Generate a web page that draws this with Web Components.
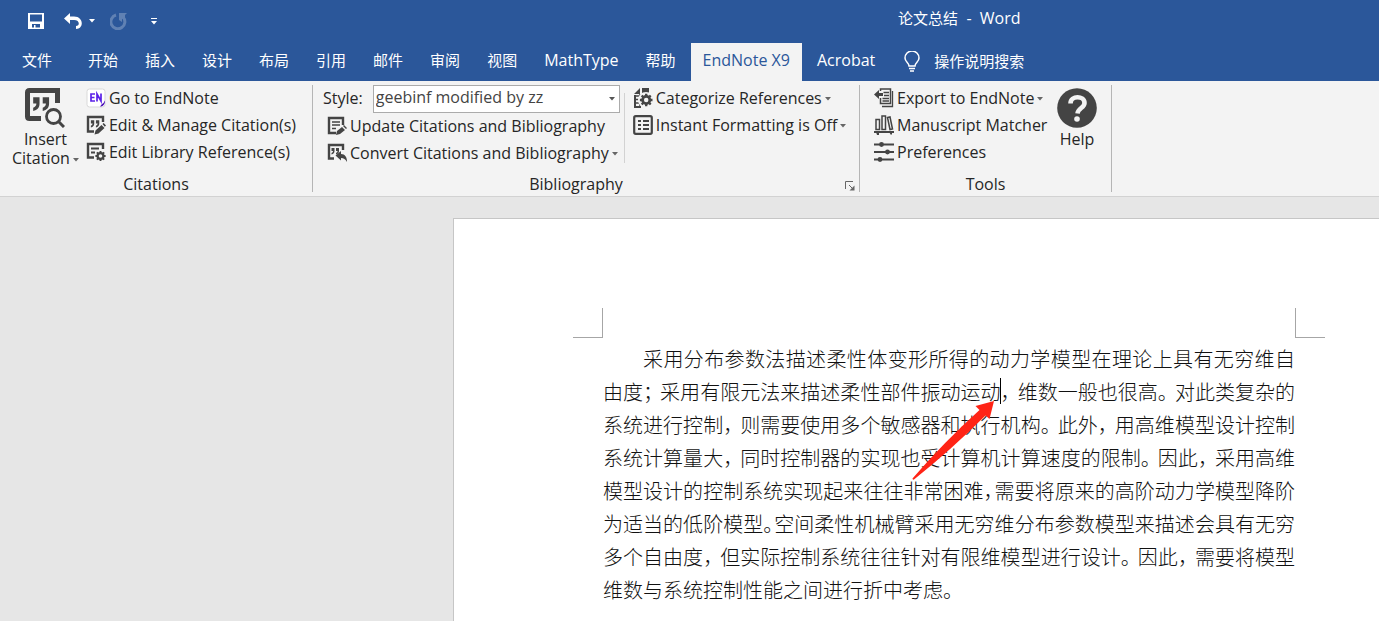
<!DOCTYPE html>
<html lang="zh-CN">
<head>
<meta charset="utf-8">
<title>论文总结 - Word</title>
<style>
  html, body { margin: 0; height: 100%; }
  body {
    --brand: #2b579a;
    --ribbon: #f3f3f3;
    --ink: #262626;
    --icon: #444;
    font: 16px/20px "Open Sans", "Noto Sans CJK SC", sans-serif;
    color: var(--ink);
    overflow: hidden;
  }
</style>
</head>
<body>
<word-app></word-app>
<script>
const define = (name, html, setup) => {
  const template = document.createElement('template');
  template.innerHTML = html;
  customElements.define(name, class extends HTMLElement {
    constructor() {
      super();
      this.attachShadow({ mode: 'open' }).append(template.content.cloneNode(true));
    }
    connectedCallback() { if (setup) setup(this, this.shadowRoot); }
  });
};

const quotes = '<path d="M3 3h6v6c0 4-2 6-6 7v-3c2-1 3-2 3-4H3zM12 3h6v6c0 4-2 6-6 7v-3c2-1 3-2 3-4h-3z"/>';
const gear = (x, y, s) => `<g transform="translate(${x} ${y}) scale(${s})"><circle r="4" fill="none" stroke="currentColor" stroke-width="3"/><path d="M0-7v3M0 4v3M-7 0h3M4 0h3M-5-5l2 2M3 3l2 2M5-5l-2 2M-3 3l-2 2" fill="none" stroke="currentColor" stroke-width="2.6"/></g>`;

const ICONS = {
  insert: [40, 40, `<path d="M16 30.500H4.500q-2 0-2-2V4.500q0-2 2-2h28V15" fill="none" stroke="currentColor" stroke-width="5"/>
    <g transform="translate(5 6) scale(1.060)">${quotes}</g>
    <circle cx="28.500" cy="28.500" r="9.500" fill="var(--ribbon)"/><circle cx="28.500" cy="28.500" r="7" fill="none" stroke="currentColor" stroke-width="2.800"/><path d="M33.500 33.500l5.500 5.500" stroke="currentColor" stroke-width="3"/>`],
  endnote: [20, 20, `<rect x="1" y="1" width="18" height="18" rx="2.500" fill="#fff" stroke="#d9d9d9"/>
    <path d="M9 6H5v7h4M5 9.500h3.500M11 13.500V6l4 7V5.500" fill="none" stroke="#5b21e8" stroke-width="1.700"/><path d="M19 12.500c0 4-2 6-5 6l2-2.500c1.500-.5 2-2 3-3.500z" fill="#4a10b8"/>`],
  cite: [20, 20, `<path d="M8 16.500H2V2h15v5" fill="none" stroke="currentColor" stroke-width="2.400"/><g transform="translate(3.200 3.500) scale(.56)">${quotes}</g><path d="M8.500 19.500l1-4 6-5.500 3 3-6 5.500zM16.500 9l1.200-1 2.300 2.500-1.200 1.200z" />`],
  library: [20, 20, `<path d="M8 15.500H2V2h15v5" fill="none" stroke="currentColor" stroke-width="2.400"/><path d="M5 6.500h8M5 10.500h4" stroke="currentColor" stroke-width="1.800"/>${gear(14.5, 14, .73)}`],
  update: [20, 20, `<path d="M9 17H2V2h14v7" fill="none" stroke="currentColor" stroke-width="2.400"/><path d="M5 6h8M5 9h8M5 12.500h4" stroke="currentColor" stroke-width="1.600"/><path d="M9 19l1-4 5-4 3 3-5 4zM16 10l1-1 3 3-1 1z"/>`],
  convert: [20, 20, `<path d="M7 15.500H2V2h14v5" fill="none" stroke="currentColor" stroke-width="2.400"/><g transform="translate(3 3.500) scale(.5)">${quotes}</g><path d="M8.500 12.500L14 8v3c4 0 6 3 6 8-2-3-3-4-6-4v2.500z"/>`],
  categorize: [20, 20, `<path d="M1 6l6-6v6zM9 0h7v5H9zM1 7h2v13H1zM1 18h7v2H1z"/><path d="M3 8h5M3 11.500h4M3 15h4M7 6v12" fill="none" stroke="currentColor" stroke-width="1.500"/><circle cx="13" cy="12" r="8" fill="var(--ribbon)"/><path d="M9 0h7v4H9z"/>${gear(13.2, 12, .9)}`],
  instant: [20, 20, `<rect x="1.200" y="1.200" width="17.600" height="17.600" rx="1.500" fill="none" stroke="currentColor" stroke-width="2.200"/><path d="M5 6h3M5 10h3M5 14h3M10 6h6M10 10h6M10 14h6" stroke="currentColor" stroke-width="2"/>`],
  export: [20, 20, `<path d="M0 6.500L5 2v3h4v3H5v3z"/><path d="M6.500 3V1h10v14.500h-10V10" fill="none" stroke="currentColor" stroke-width="1.500"/><path d="M18.500 3v15.500H8M9.500 4.500H15M10 7.500h5M8.500 10.500H15M8.500 13H15" fill="none" stroke="currentColor" stroke-width="1.300"/>`],
  books: [20, 20, `<path d="M2 4.500h3.500v10H2zM8 1h3.500v13.500H8zM13.500 2.500L16 2l2.500 12-2.500.5z" fill="none" stroke="currentColor" stroke-width="1.500"/><path d="M0 17h20" stroke="currentColor" stroke-width="2"/><path d="M2 17h3v3H3zM15 17h3v2l-1 1z"/>`],
  prefs: [20, 20, `<path d="M0 2.500h20M0 10h20M0 17.500h20" stroke="currentColor" stroke-width="1.800"/><circle cx="7.500" cy="2.500" r="2.400"/><circle cx="13.500" cy="10" r="2.400"/><circle cx="6" cy="17.500" r="2.400"/>`],
  help: [40, 40, `<circle cx="20" cy="20" r="19.800"/><path d="M13.500 15.500c0-8.500 14-8 14-.5 0 5-6.500 5-7 10.500" fill="none" stroke="var(--ribbon)" stroke-width="4.600"/><circle cx="20" cy="31" r="2.800" fill="var(--ribbon)"/>`],
  arrow: [6, 4, '<path d="M0 0h6L3 3.500z"/>'],
  launcher: [10, 10, '<path d="M.5 8V.5H8M4 4l4 4" fill="none" stroke="currentColor"/><path d="M9.500 4.500v5h-5z"/>'],
  save: [16, 16, '<path d="M0 0h16v16H0zM2 1.500V8.500h12V1.500zM4 11v3.500h2V12h1.500v2.500H12V11z" fill-rule="evenodd"/>'],
  undo: [18, 16, '<path d="M0 5.500L6 0v3.500h4c10 0 10 12.500 2 12.500v-3c4 0 4-6-2-6H6V11z"/>'],
  redo: [17, 17, '<path d="M6 2A7 7 0 1 0 13 4" fill="none" stroke="currentColor" stroke-width="3"/><path d="M9 0h8l-2 2v2.500L12 6v3L9 7z"/>'],
  customize: [6, 7, '<path d="M0 0h6v1H0zM0 3h6L3 6.500z"/>'],
  bulb: [16, 21, '<path d="M5 15c0-3-4-4-4-8a7 7 0 0 1 14 0c0 4-4 5-4 8zM5 17.500h6M6 20h4" fill="none" stroke="currentColor" stroke-width="1.500"/>']
};

define('ui-icon', `<style>:host{display:block;flex:none}svg{display:block;fill:currentColor}</style>`, (host, root) => {
  const name = host.getAttribute('name');
  if (!name || root.querySelector('svg')) return;
  const [w, h, body] = ICONS[name];
  root.innerHTML += `<svg width="${w}" height="${h}" viewBox="0 0 ${w} ${h}" aria-hidden="true">${body}</svg>`;
});

define('title-bar', `<style>
  :host{display:flex;align-items:center;height:42px;padding-left:28px;color:#fff}
  button{display:flex;align-items:center;border:0;padding:0;background:none;color:inherit;font:inherit}
  .undo{margin-left:20px;gap:7px}.redo{margin-left:15px;opacity:.25}.more{margin-left:24px}
  h1{margin:0;padding-bottom:6px;font:inherit;font-size:15px;white-space:pre}
  .app{font-size:16px}
  .gap{flex:0 0 calc(55% - 2px)}
</style>
<button aria-label="保存"><ui-icon name="save"></ui-icon></button>
<button class="undo" aria-label="撤消"><ui-icon name="undo"></ui-icon><ui-icon name="arrow"></ui-icon></button>
<button class="redo" aria-label="重复"><ui-icon name="redo"></ui-icon></button>
<button class="more" aria-label="自定义快速访问工具栏"><ui-icon name="customize"></ui-icon></button>
<span class="gap"></span><h1><slot></slot><span class="app">  -  Word</span></h1>`);

define('ribbon-tab', `<style>
  :host{display:block}
  button{height:38px;padding:0 12px 4px;border:0;background:none;color:#fff;font:inherit;font-size:15px;white-space:nowrap}
  :host(:lang(en)) button{font-size:16px}
  :host([selected]) button{background:var(--ribbon);color:var(--brand)}
  :host([file]){margin-right:9px}
</style><button role="tab"><slot></slot></button>`, (host, root) =>
  root.querySelector('button').setAttribute('aria-selected', host.hasAttribute('selected')));

define('tab-strip', `<style>
  :host{display:flex;gap:3px;padding:0 10px;height:38px;margin-top:1px;color:#fff;overflow:hidden}
  .search{display:flex;align-items:center;gap:14px;margin-left:14px;padding:0 0 2px;border:0;background:none;color:inherit;font:inherit;font-size:15px;white-space:nowrap}
</style><slot></slot><button class="search"><ui-icon name="bulb"></ui-icon>操作说明搜索</button>`);

define('ribbon-command', `<style>
  :host{display:block;color:var(--ink)}
  button{display:flex;align-items:center;gap:3px;height:27px;padding:0 0 2px;border:0;background:none;color:inherit;font:inherit;white-space:nowrap}
  .icon{color:var(--icon)}
  .arrow{display:none;color:#666;margin-left:3px;vertical-align:middle}
  :host([menu]) .arrow{display:inline-block}
  :host([large]) button{flex-direction:column;gap:2px;height:auto;padding-top:3px;line-height:19px}
  :host([large]) .label{text-align:center;white-space:pre-line}
</style><button><span class="label"><slot></slot><ui-icon class="arrow" name="arrow"></ui-icon></span></button>`,
  (host, root) => {
    if (root.querySelector('.icon')) return;
    const icon = document.createElement('ui-icon');
    icon.className = 'icon';
    icon.setAttribute('name', host.getAttribute('icon'));
    root.querySelector('button').prepend(icon);
  });

define('ribbon-group', `<style>
  :host{display:flex;flex-direction:column;box-sizing:border-box;height:107px;border-right:1px solid #b5b5b5}
  .body{display:flex;flex:1}
  footer{display:flex;align-items:center;height:16px}
  .name{flex:1;text-align:center}
  button{display:none;border:0;padding:4px 4px 0 6px;background:none;color:#666}
  :host([launcher]) button{display:block}
</style><div class="body"><slot></slot></div>
<footer><span class="name"></span><button><ui-icon name="launcher"></ui-icon></button></footer>`,
  (host, root) => {
    root.querySelector('.name').textContent = host.getAttribute('name');
    root.querySelector('button').setAttribute('aria-label', host.getAttribute('name') + ' settings');
  });

define('style-picker', `<style>
  :host{display:flex;align-items:center;gap:10px;height:28px}
  .box{display:grid;align-items:center;width:247px}
  select,ui-icon{grid-area:1/1}
  label{padding-bottom:2px}
  select{appearance:none;box-sizing:border-box;width:100%;height:28px;border:1px solid #ababab;border-radius:0;background:#fff;padding:0 20px 4px 2px;font:inherit;color:#444}
  ui-icon{justify-self:end;margin-right:5px;color:#555;z-index:1;pointer-events:none}
</style><label for="style">Style:</label><span class="box"><select id="style"><option>geebinf modified by zz</option></select><ui-icon name="arrow"></ui-icon></span>`);

define('word-ribbon', `<style>
  :host{display:flex;padding-top:4px;height:111px;background:var(--ribbon);border-bottom:1px solid #d2d2d2}
  .col{display:flex;flex-direction:column}
  .citations{width:313px}.bibliography{width:547px}.tools{width:252px}
  .citations .big{margin:0 7px 0 12px}
  .bibliography .main{margin-left:10px}
  .sub{padding-left:4px}
  .side{margin:8px 0 0 4px;border-left:1px solid #d2d2d2;height:70px}
  .side .col{margin:-8px 0 0 8px}
  .tools .list{margin-left:14px}.tools .big{margin-left:auto;margin-right:14px}
</style>
<ribbon-group class="citations" name="Citations">
  <ribbon-command class="big" icon="insert" large menu>Insert
Citation</ribbon-command>
  <div class="col">
    <ribbon-command icon="endnote">Go to EndNote</ribbon-command>
    <ribbon-command icon="cite">Edit &amp; Manage Citation(s)</ribbon-command>
    <ribbon-command icon="library">Edit Library Reference(s)</ribbon-command>
  </div>
</ribbon-group>
<ribbon-group class="bibliography" name="Bibliography" launcher>
  <div class="col main">
    <style-picker></style-picker>
    <ribbon-command class="sub" icon="update">Update Citations and Bibliography</ribbon-command>
    <ribbon-command class="sub" icon="convert" menu>Convert Citations and Bibliography</ribbon-command>
  </div>
  <div class="side"><div class="col">
    <ribbon-command icon="categorize" menu>Categorize References</ribbon-command>
    <ribbon-command icon="instant" menu>Instant Formatting is Off</ribbon-command>
  </div></div>
</ribbon-group>
<ribbon-group class="tools" name="Tools">
  <div class="col list">
    <ribbon-command icon="export" menu>Export to EndNote</ribbon-command>
    <ribbon-command icon="books">Manuscript Matcher</ribbon-command>
    <ribbon-command icon="prefs">Preferences</ribbon-command>
  </div>
  <ribbon-command class="big" icon="help" large>Help</ribbon-command>
</ribbon-group>`);

define('text-caret', `<style>
  :host{display:inline-block;position:relative;width:0;height:16px}
  .bar{position:absolute;left:-1px;top:-6px;width:1px;height:26px;background:#000}
  svg{position:absolute;left:-91px;top:16px;z-index:1}
</style><span class="bar"></span>
<svg width="86" height="82" viewBox="0 0 86 82" aria-hidden="true"><path d="M84 1L65.500 6l4 4Q34 42 2.500 78.500q0 1.500 1.500 1Q41 50 75.500 15.500l4 3.500z" fill="#ff2416"/></svg>`);

define('document-page', `<style>
  :host{display:block;box-sizing:border-box;width:992px;min-height:1400px;margin:21px 0 0 453px;padding:89px 119px;background:#fff;border:1px solid #c6c6c6}
  .marks{display:flex;justify-content:space-between;height:30px;padding-bottom:4px}
  .marks i{box-sizing:border-box;width:30px;height:30px;border:solid #a6a6a6;border-width:0 1px 1px 0}
  .marks i:last-child{border-width:0 0 1px 1px}
  .text{padding:0 30px;color:#111}
</style><div class="marks"><i></i><i></i></div><div class="text"><slot></slot></div>`);

define('text-lines', `<style>
  :host{display:block;font:300 20px/33px "Noto Sans CJK SC",sans-serif}
  p{margin:0;line-height:inherit}
  .l{display:block;white-space:nowrap;text-align:justify;text-align-last:justify}
  .first{padding-left:40px}.end{text-align-last:left}
  b{font-weight:inherit;font-feature-settings:"halt";margin-right:7px}
  .tight b{margin-right:1px}
</style><p lang="zh-CN"><span class="l first">采用分布参数法描述柔性体变形所得的动力学模型在理论上具有无穷维自</span><span class="l">由度<b>；</b>采用有限元法来描述柔性部件振动运动<text-caret></text-caret><b>，</b>维数一般也很高<b>。</b>对此类复杂的</span><span class="l">系统进行控制<b>，</b>则需要使用多个敏感器和执行机构<b>。</b>此外<b>，</b>用高维模型设计控制</span><span class="l">系统计算量大<b>，</b>同时控制器的实现也受计算机计算速度的限制<b>。</b>因此<b>，</b>采用高维</span><span class="l tight">模型设计的控制系统实现起来往往非常困难<b>，</b>需要将原来的高阶动力学模型降阶</span><span class="l tight">为适当的低阶模型<b>。</b>空间柔性机械臂采用无穷维分布参数模型来描述会具有无穷</span><span class="l">多个自由度<b>，</b>但实际控制系统往往针对有限维模型进行设计<b>。</b>因此<b>，</b>需要将模型</span><span class="l end">维数与系统控制性能之间进行折中考虑<b>。</b></span></p>`);

define('word-app', `<style>
  :host{display:flex;flex-direction:column;height:100vh;background:#e6e6e6}
  header{background:var(--brand);flex:none}
  word-ribbon{flex:none}
  main{flex:1;min-height:0;overflow:hidden}
</style>
<header>
  <title-bar>论文总结</title-bar>
  <tab-strip role="tablist"><ribbon-tab file>文件</ribbon-tab><ribbon-tab>开始</ribbon-tab><ribbon-tab>插入</ribbon-tab><ribbon-tab>设计</ribbon-tab><ribbon-tab>布局</ribbon-tab><ribbon-tab>引用</ribbon-tab><ribbon-tab>邮件</ribbon-tab><ribbon-tab>审阅</ribbon-tab><ribbon-tab>视图</ribbon-tab><ribbon-tab lang="en">MathType</ribbon-tab><ribbon-tab>帮助</ribbon-tab><ribbon-tab lang="en" selected>EndNote X9</ribbon-tab><ribbon-tab lang="en">Acrobat</ribbon-tab></tab-strip>
</header>
<word-ribbon></word-ribbon>
<main><document-page><text-lines></text-lines></document-page></main>`);
</script>
</body>
</html>
